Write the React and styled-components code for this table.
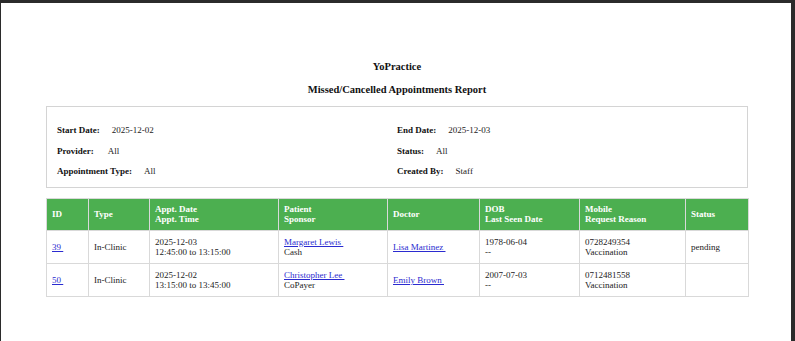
import styled, { createGlobalStyle } from "styled-components"

const GlobalStyle = createGlobalStyle`
    html, body {
        margin: 0;
        padding: 0;
        background: #2b2b2b;
    }
    body {
        font-family: "Liberation Serif", "Times New Roman", serif;
        color: #222;
    }
`

const Frame = styled.div`
    padding: 3px 4px 0 1px;
    height: 341px;
    box-sizing: border-box;
`

const Page = styled.div`
    background: #fff;
    height: 100%;
    padding-top: 58px;
    box-sizing: border-box;
    font-size: 9px;
`

const Report = styled.div`
    width: 702px;
    margin: 0 auto;
    position: relative;
    left: 1px;
`

const Heading = styled.h3`
    font-size: 10.5px;
    font-weight: bold;
    text-align: center;
    margin: 0 0 10.5px;
    line-height: 12px;
    color: #111;
`

const FilterBox = styled.div`
    border: 1px solid #d4d4d4;
    padding: 18px 10px 10px;
    display: grid;
    grid-template-columns: 1fr 1fr;
    row-gap: 10px;
    margin-bottom: 10px;
`

const Filter = styled.div`
    line-height: 10.5px;
    white-space: nowrap;
`

const Label = styled.b`
    margin-right: ${(p) => p.gap || 12}px;
    color: #111;
`

const Table = styled.table`
    width: 100%;
    border-collapse: collapse;
    table-layout: fixed;
`

const Th = styled.th`
    box-sizing: border-box;
    background: #4caf50;
    color: #fff;
    text-align: left;
    font-weight: bold;
    padding: 5.5px 5px;
    border: 1px solid #d9d9d9;
    line-height: 10.4px;
    width: ${(p) => p.w}px;
`

const Td = styled.td`
    padding: 5.5px 5px;
    border: 1px solid #d9d9d9;
    line-height: 10.4px;
    vertical-align: middle;
`

const Link = styled.a`
    color: #2b2bd0;
    text-decoration: underline;
    white-space: pre;
`

const filters = [
    ["Start Date:", "2025-12-02", 12],
    ["End Date:", "2025-12-03", 12],
    ["Provider:", "All", 14],
    ["Status:", "All", 12],
    ["Appointment Type:", "All", 12],
    ["Created By:", "Staff", 12],
]

const columns = [
    [42, "ID"],
    [61, "Type"],
    [129, "Appt. Date", "Appt. Time"],
    [109, "Patient", "Sponsor"],
    [92, "Doctor"],
    [100, "DOB", "Last Seen Date"],
    [106, "Mobile", "Request Reason"],
    [63, "Status"],
]

const rows = [
    {
        id: "39", type: "In-Clinic", date: "2025-12-03", time: "12:45:00 to 13:15:00",
        patient: "Margaret Lewis", sponsor: "Cash", doctor: "Lisa Martinez",
        dob: "1978-06-04", seen: "--", mobile: "0728249354", reason: "Vaccination", status: "pending",
    },
    {
        id: "50", type: "In-Clinic", date: "2025-12-02", time: "13:15:00 to 13:45:00",
        patient: "Christopher Lee", sponsor: "CoPayer", doctor: "Emily Brown",
        dob: "2007-07-03", seen: "--", mobile: "0712481558", reason: "Vaccination", status: "",
    },
]

export default function App() {
    return (
        <>
            <GlobalStyle />
            <Frame>
                <Page>
                    <Report>
                        <Heading>YoPractice</Heading>
                        <Heading>Missed/Cancelled Appointments Report</Heading>
                        <FilterBox>
                            {filters.map(([label, value, gap]) => (
                                <Filter key={label}>
                                    <Label gap={gap}>{label}</Label>
                                    {value}
                                </Filter>
                            ))}
                        </FilterBox>
                        <Table>
                            <thead>
                                <tr>
                                    {columns.map(([w, a, b]) => (
                                        <Th key={a} w={w}>
                                            {a}
                                            {b && <><br />{b}</>}
                                        </Th>
                                    ))}
                                </tr>
                            </thead>
                            <tbody>
                                {rows.map((r) => (
                                    <tr key={r.id}>
                                        <Td><Link href="#">{r.id + " "}</Link></Td>
                                        <Td>{r.type}</Td>
                                        <Td>{r.date}<br />{r.time}</Td>
                                        <Td><Link href="#">{r.patient + " "}</Link><br />{r.sponsor}</Td>
                                        <Td><Link href="#">{r.doctor + " "}</Link></Td>
                                        <Td>{r.dob}<br />{r.seen}</Td>
                                        <Td>{r.mobile}<br />{r.reason}</Td>
                                        <Td>{r.status}</Td>
                                    </tr>
                                ))}
                            </tbody>
                        </Table>
                    </Report>
                </Page>
            </Frame>
        </>
    )
}
